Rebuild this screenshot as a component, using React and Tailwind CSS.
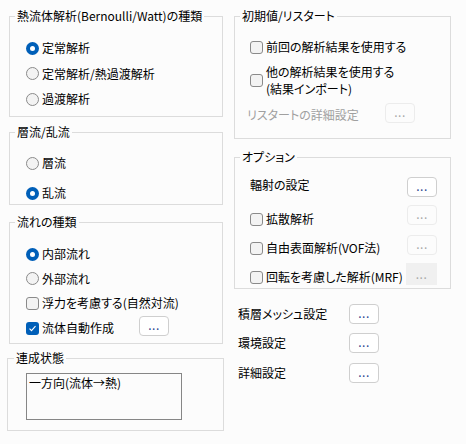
import React from "react";

// small dialog controls
const Radio = ({ checked, label }) => (
  <div className="flex h-[20px] items-center">
    {checked ? (
      <span className="flex h-[13px] w-[13px] items-center justify-center rounded-full bg-[#005fb8]">
        <span className="h-[5px] w-[5px] rounded-full bg-white" />
      </span>
    ) : (
      <span className="h-[13px] w-[13px] rounded-full border border-[#8a8a8a] bg-[#f3f3f3]" />
    )}
    <span className="ml-[3px]">{label}</span>
  </div>
);

const Check = ({ checked }) =>
  checked ? (
    <span className="flex h-[13px] w-[13px] shrink-0 items-center justify-center rounded-[3px] bg-[#005fb8]">
      <svg width="9" height="9" viewBox="0 0 9 9">
        <path d="M1.5 4.6l2 2 4-4.4" fill="none" stroke="white" strokeWidth="1.1" />
      </svg>
    </span>
  ) : (
    <span className="h-[13px] w-[13px] shrink-0 rounded-[3px] border border-[#8a8a8a] bg-[#f3f3f3]" />
  );

const Dots = ({ disabled, className = "" }) => (
  <button
    className={`flex h-[20px] w-[30px] shrink-0 items-end justify-center rounded-[4px] border pb-[4px] ${
      disabled ? "border-[#ececec] text-[#a8a8a8]" : "border-[#cfcfcf] bg-white text-[#1f3f8f]"
    } ${className}`}
  >
    <span className="text-[12px] leading-none tracking-[0.5px]">...</span>
  </button>
);

const Group = ({ title, className = "", legend = "ml-[5px]", children }) => (
  <fieldset className={`border border-[#dcdcdc] ${className}`}>
    <legend className={`${legend} px-[2px] leading-[16px]`}>{title}</legend>
    {children}
  </fieldset>
);

export default function App() {
  return (
    <div className="flex h-[444px] w-[466px] bg-[#fcfcfc] pt-[8px] font-['Noto_Sans_CJK_JP',sans-serif] text-[12px] text-black [font-feature-settings:'palt']">
      {/* left column */}
      <div className="ml-[9px] flex w-[214px] flex-col">
        <Group title="熱流体解析(Bernoulli/Watt)の種類">
          <div className="flex flex-col gap-[5.5px] pb-[7px] pl-[16px] pt-[14px]">
            <Radio checked label="定常解析" />
            <Radio label="定常解析/熱過渡解析" />
            <Radio label="過渡解析" />
          </div>
        </Group>

        <Group title="層流/乱流" className="mt-[7px]">
          <div className="flex flex-col gap-[10px] pb-[1px] pl-[16px] pt-[13px]">
            <Radio label="層流" />
            <Radio checked label="乱流" />
          </div>
        </Group>

        <Group title="流れの種類" className="mt-[9px]">
          <div className="flex flex-col gap-[4.7px] pb-[5px] pl-[16px] pt-[14px]">
            <Radio checked label="内部流れ" />
            <Radio label="外部流れ" />
            <div className="flex h-[20px] items-center">
              <Check />
              <span className="ml-[3px]">浮力を考慮する(自然対流)</span>
            </div>
            <div className="flex h-[20px] items-center">
              <div className="flex w-[113px] items-center">
                <Check checked />
                <span className="ml-[3px]">流体自動作成</span>
              </div>
              <Dots className="mb-[5px]" />
            </div>
          </div>
        </Group>

        <Group title="連成状態" legend="ml-[6px]" className="-ml-[2px] mt-[6px] w-[217px]">
          <div className="pb-[10px] pl-[18px] pt-[7px]">
            <div className="h-[47px] w-[156px] border border-[#868686] pl-[2px] pt-[1px] leading-[16px]">
              一方向(流体→熱)
            </div>
          </div>
        </Group>
      </div>

      {/* right column */}
      <div className="ml-[11px] flex w-[217px] flex-col">
        <Group title="初期値/リスタート">
          <div className="flex flex-col pb-[15px] pl-[15px] pt-[13px]">
            <div className="flex h-[20px] items-center">
              <Check />
              <span className="ml-[3px]">前回の解析結果を使用する</span>
            </div>
            <div className="mt-[6px] flex items-center">
              <Check />
              <div className="ml-[3px] flex flex-col">
                <span className="h-[17px] leading-[17px]">他の解析結果を使用する</span>
                <span className="h-[17px] leading-[17px]">(結果インポート)</span>
              </div>
            </div>
            <div className="-ml-[3px] mt-[6px] flex h-[20px] items-center">
              <span className="mt-[4px] w-[138px] text-[#a0a0a0]">リスタートの詳細設定</span>
              <Dots disabled />
            </div>
          </div>
        </Group>

        <Group title="オプション" className="mt-[10px]">
          <div className="flex flex-col pb-[1px] pl-[15px] pt-[10px]">
            <div className="flex h-[20px] items-center">
              <span className="w-[157px]">輻射の設定</span>
              <Dots className="mt-[3px]" />
            </div>
            <div className="mt-[14px] flex h-[20px] items-center">
              <div className="flex w-[157px] items-center">
                <Check />
                <span className="ml-[3px]">拡散解析</span>
              </div>
              <Dots disabled className="mb-[8px]" />
            </div>
            <div className="mt-[9px] flex h-[20px] items-center">
              <div className="flex w-[157px] items-center">
                <Check />
                <span className="ml-[3px]">自由表面解析(VOF法)</span>
              </div>
              <Dots disabled className="mb-[7px]" />
            </div>
            <div className="mt-[9px] flex h-[20px] items-center">
              <div className="flex w-[156px] items-center">
                <Check />
                <span className="ml-[3px]">回転を考慮した解析(MRF)</span>
              </div>
              <Dots disabled className="mb-[6px] h-[22px] w-[31px] rounded-none border-[#f0f0f0] bg-[#f0f0f0]" />
            </div>
          </div>
        </Group>

        <div className="mt-[15px] flex flex-col pl-[4px]">
          <div className="flex h-[20px] items-center">
            <span className="w-[111px]">積層メッシュ設定</span>
            <Dots />
          </div>
          <div className="mt-[9px] flex h-[20px] items-center">
            <span className="w-[111px]">環境設定</span>
            <Dots />
          </div>
          <div className="mt-[10px] flex h-[20px] items-center">
            <span className="w-[111px]">詳細設定</span>
            <Dots />
          </div>
        </div>
      </div>
    </div>
  );
}
